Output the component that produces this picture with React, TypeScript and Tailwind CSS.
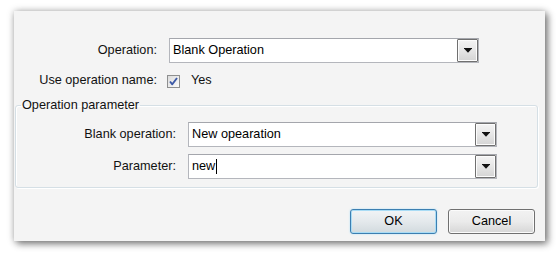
import React from 'react';

const font = { fontFamily: '"Liberation Sans", Arial, sans-serif' };

const ArrowButton: React.FC = () => (
    <div className="h-full w-[21px] shrink-0 border border-[#707070] rounded-[1px] bg-gradient-to-b from-[#f4f4f4] via-[#e6e6e6] to-[#d4d4d4] shadow-[inset_0_0_0_1px_#fcfcfc] flex items-center justify-center">
        <svg width="8" height="5" viewBox="0 0 8 5">
            <rect x="0" y="0" width="8" height="1" fill="#111" />
            <polygon points="0.5,1 7.5,1 4,4.8" fill="#111" />
        </svg>
    </div>
);

interface ComboProps {
    value: string;
    width: string;
    caret?: boolean;
}

const Combo: React.FC<ComboProps> = ({ value, width, caret }) => (
    <div className={`${width} h-[25px] ml-[12px] flex items-center bg-white border border-[#b4b6bc] border-t-[#a4a6ac]`}>
        <div className="flex-1 flex items-center pl-[3px] text-black">
            <span>{value}</span>
            {caret && <span className="inline-block w-[1px] h-[15px] bg-black ml-[1px]" />}
        </div>
        <ArrowButton />
    </div>
);

const Checkbox: React.FC = () => (
    <div className="w-[13px] h-[13px] border border-[#8e8f8f] bg-gradient-to-br from-[#dcdcdc] to-[#fbfbfb] flex items-center justify-center">
        <svg width="11" height="11" viewBox="0 0 11 11">
            <path d="M2 5.5 L4.3 8.3 L9 2" fill="none" stroke="#3d5aa7" strokeWidth="1.9" strokeLinejoin="round" />
        </svg>
    </div>
);

const DialogButton: React.FC<{ label: string; primary?: boolean }> = ({ label, primary }) => (
    <button
        className={`w-[87px] h-[25px] rounded-[3px] border text-black ${
            primary
                ? 'border-[#3c7fb1] shadow-[inset_0_0_0_1px_#a9dcf5,0_0_2px_#a9dcf5] bg-gradient-to-b from-[#f1f4f6] via-[#e4e9ec] to-[#d2dade]'
                : 'border-[#707070] shadow-[inset_0_0_0_1px_#fbfbfb] bg-gradient-to-b from-[#f2f2f2] via-[#ebebeb] to-[#d6d6d6]'
        }`}
    >
        {label}
    </button>
);

export default function App() {
    return (
        <div className="w-[560px] h-[253px] bg-white pt-[11px] pl-[14px]" style={font}>
            <div className="w-[531px] h-[230px] bg-[#f4f4f4] shadow-[3px_3px_7px_rgba(0,0,0,0.45),0_0_7px_rgba(0,0,0,0.25)] pt-[27px] flex flex-col text-[12.7px] text-[#111]">
                <div className="h-[25px] flex items-center">
                    <div className="w-[143px] text-right">Operation:</div>
                    <Combo value="Blank Operation" width="w-[310px]" />
                </div>
                <div className="h-[16px] mt-[10px] flex items-center">
                    <div className="w-[143px] text-right">Use operation name:</div>
                    <div className="ml-[10px]">
                        <Checkbox />
                    </div>
                    <span className="ml-[11px]">Yes</span>
                </div>
                <fieldset className="ml-[1px] w-[523px] mt-[9px] border border-[#d5dfe5] rounded-[3px] pb-[8px] shadow-[inset_1px_1px_0_#ffffff,1px_1px_0_#ffffff]">
                    <legend className="ml-[5px] px-[1px] leading-[14px]">Operation parameter</legend>
                    <div className="h-[25px] mt-[10px] flex items-center">
                        <div className="w-[160px] text-right">Blank operation:</div>
                        <Combo value="New opearation" width="w-[309px]" />
                    </div>
                    <div className="h-[25px] mt-[7px] flex items-center">
                        <div className="w-[160px] text-right">Parameter:</div>
                        <Combo value="new" width="w-[309px]" caret />
                    </div>
                </fieldset>
                <div className="mt-[21px] flex justify-end gap-[11px] pr-[10px]">
                    <DialogButton label="OK" primary />
                    <DialogButton label="Cancel" />
                </div>
            </div>
        </div>
    );
}
